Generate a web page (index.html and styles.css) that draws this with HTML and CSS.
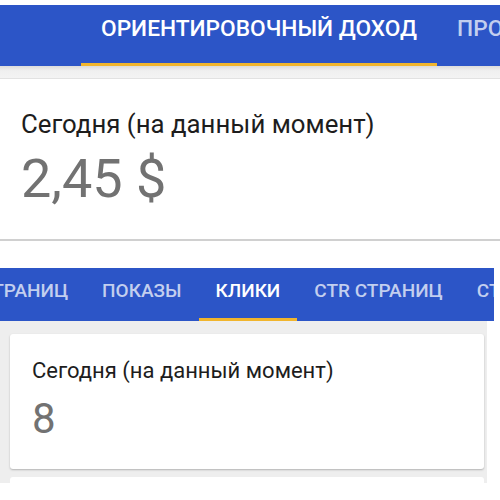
FILE: index.html
```html
<!DOCTYPE html>
<html lang="ru">
<head>
<meta charset="utf-8">
<link rel="stylesheet" href="styles.css">
</head>
<body>
<section class="shot shot-one">
  <nav class="tabs tabs-one">
    <div class="tab-row row-one">
      <div class="tab active">ОРИЕНТИРОВОЧНЫЙ ДОХОД</div>
      <div class="tab">ПРОСМОТРЫ СТРАНИЦ</div>
    </div>
  </nav>
  <div class="gap-grey"></div>
  <div class="card card-one">
    <div class="label">Сегодня (на данный момент)</div>
    <div class="value">2,45 $</div>
  </div>
  <div class="gap-white"></div>
</section>
<section class="shot shot-two">
  <nav class="tabs tabs-two">
    <div class="tab-row row-two">
      <div class="tab">СТРАНИЦ</div>
      <div class="tab">ПОКАЗЫ</div>
      <div class="tab active">КЛИКИ</div>
      <div class="tab">CTR СТРАНИЦ</div>
      <div class="tab">СТОИМОСТЬ</div>
    </div>
  </nav>
  <div class="panel">
    <div class="card card-two">
      <div class="label">Сегодня (на данный момент)</div>
      <div class="value">8</div>
    </div>
    <div class="card card-next"></div>
  </div>
</section>
</body>
</html>
```
FILE: styles.css
```css
* { box-sizing: border-box; }
html, body { margin: 0; padding: 0; }
body {
  width: 500px;
  height: 500px;
  overflow: hidden;
  background: #ffffff;
  font-family: Roboto, "Noto Sans", sans-serif;
}
.shot-one { padding-top: 5px; }
.tabs {
  background: #2c55c7;
  overflow: hidden;
  display: flex;
}
.tab-row {
  display: flex;
  white-space: nowrap;
  flex: none;
}
.tab {
  color: rgba(255, 255, 255, 0.72);
  font-weight: 500;
  border-bottom: 3px solid transparent;
}
.tab.active {
  color: #ffffff;
  border-bottom-color: #f1b52d;
}
.tabs-one { height: 61px; }
.row-one { padding-left: 81px; }
.row-one .tab {
  font-size: 22.7px;
  line-height: 28px;
  padding: 10px 20px 20px;
  height: 61px;
}
.gap-grey {
  height: 13px;
  background: linear-gradient(#dcdcdc, #f0f0f0 40%, #f3f3f3);
  border-bottom: 1px solid #e2e2e2;
}
.card { background: #ffffff; }
.card-one {
  height: 162px;
  padding: 30px 21px 0;
  border-bottom: 2px solid #d0d0d0;
}
.label {
  color: #1d1d1d;
  font-size: 25.8px;
  line-height: 30px;
}
.value {
  color: #727272;
  font-size: 54px;
  line-height: 64px;
  margin-top: 8px;
}
.gap-white { height: 27px; }
.shot-two { width: 497px; }
.tabs-two { height: 53px; width: 494px; }
.row-two { margin-left: -37px; }
.row-two .tab {
  font-size: 19px;
  line-height: 24px;
  padding: 11px 17px 15px;
  height: 53px;
}
.panel {
  background: #eeeeee;
  width: 487px;
  padding: 13px 3px 0 10px;
  height: 162px;
}
.card-two {
  height: 135px;
  padding: 24px 22px 0;
  border-radius: 3px;
  box-shadow: 0 1px 2px rgba(0, 0, 0, 0.25);
}
.card-two .label { font-size: 22px; line-height: 26px; }
.card-two .value { font-size: 42px; line-height: 50px; margin-top: 10px; }
.card-next {
  height: 20px;
  margin-top: 8px;
  border-radius: 3px;
}
```
